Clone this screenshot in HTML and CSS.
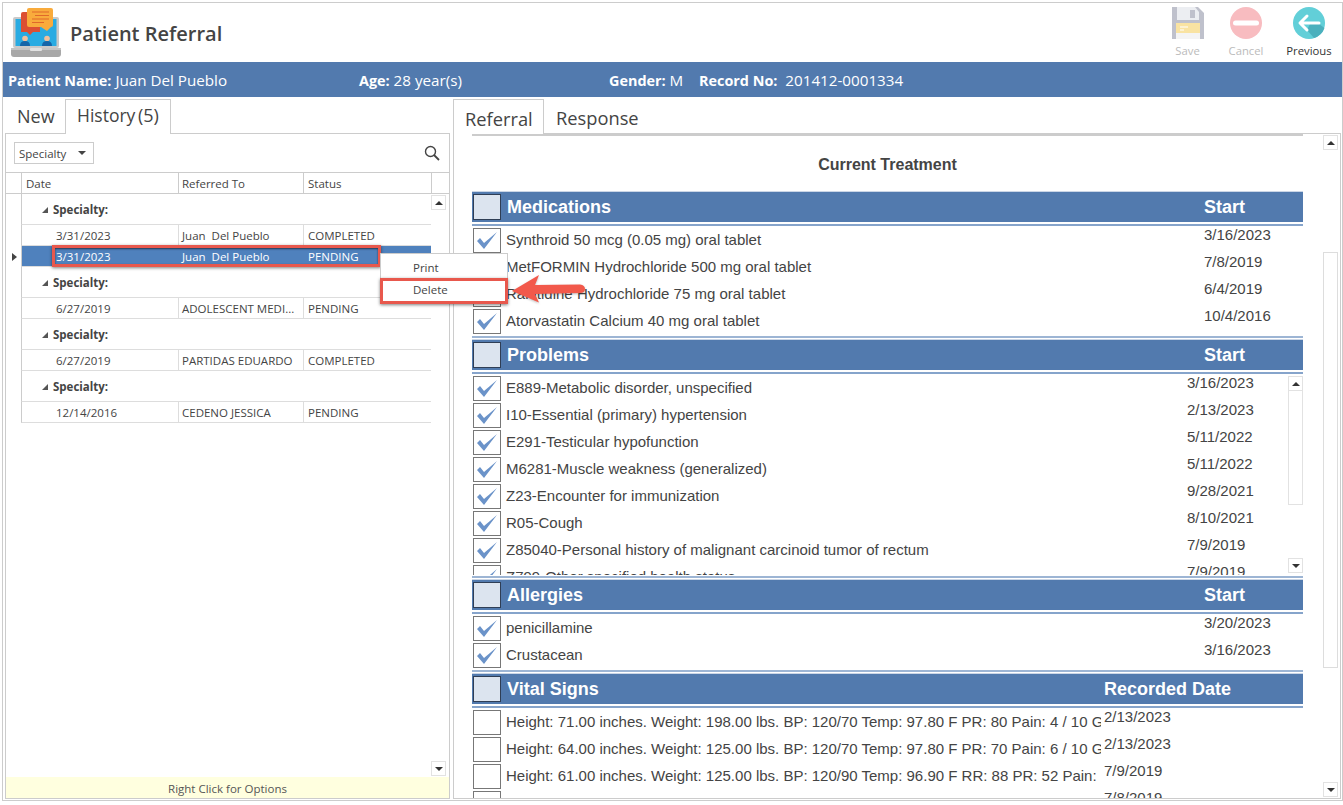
FILE: index.html
```html
<!DOCTYPE html>
<html lang="en">
<head>
<meta charset="utf-8">
<title>Patient Referral</title>
<link rel="stylesheet" href="styles.css">
</head>
<body>
<div class="app">
  <header class="top">
    <svg class="logo" viewBox="0 0 50 50" width="50" height="50">
      <rect x="2" y="9" width="46" height="31" rx="2" fill="#c9c9c9"/>
      <rect x="4.5" y="11" width="41" height="27" fill="#29abe2"/>
      <path d="M0 40h50v6q0 3-3 3H3q-3 0-3-3z" fill="#a8a8a8"/>
      <path d="M0 40h50v2H0z" fill="#c4c4c4"/>
      <rect x="19" y="40" width="12" height="3" rx="1" fill="#e2e2e2"/>
      <path d="M12 4h17v20H22l-3 3-3-3h-6V6q0-2 2-2z" fill="#dc4f33"/>
      <rect x="16" y="0" width="26" height="19" rx="2" fill="#f9ab3c"/>
      <path d="M30 19h10l-4 4z" fill="#f9ab3c"/>
      <path d="M21 4h17M24 7.5h14M21 11h17M21 14.5h12" stroke="#e0692a" stroke-width="1.1"/>
      <circle cx="14" cy="30.500" r="2.800" fill="#f2c09c"/>
      <path d="M9 38q0-5 5-5t5 5z" fill="#1565a8"/>
      <circle cx="36" cy="30.500" r="2.800" fill="#f2c09c"/>
      <path d="M31 38q0-5 5-5t5 5z" fill="#1565a8"/>
    </svg>
    <h1 class="title">Patient Referral</h1>
    <div class="actions">
      <div class="action off act-save">
        <svg viewBox="0 0 32 32" width="32" height="32">
          <path d="M0 0h26l6 6v26H0z" fill="#bfc1cc"/>
          <path d="M5 0h18l4 5v8H5z" fill="#eceef2"/>
          <rect x="18" y="3" width="5" height="8" fill="#bfc1cc"/>
          <rect x="4" y="16" width="24" height="16" fill="#f4f4f4"/>
          <rect x="4" y="16" width="24" height="10" fill="#f9e3a2"/>
          <path d="M8 20h8M8 23h4" stroke="#fff" stroke-width="1.2"/>
        </svg>
        <span>Save</span>
      </div>
      <div class="action off act-cancel">
        <svg viewBox="0 0 32 32" width="32" height="32">
          <circle cx="16" cy="16" r="16" fill="#f8bcc0"/>
          <rect x="3" y="13.500" width="26" height="5" rx="2.500" fill="#fff"/>
        </svg>
        <span>Cancel</span>
      </div>
      <div class="action act-prev">
        <svg viewBox="0 0 32 32" width="32" height="32">
          <circle cx="16" cy="16" r="16" fill="#62cfd8"/>
          <path d="M14 23l3-6h9l5.500 4A16 16 0 0 1 21 31z" fill="#4bb0bd"/>
          <path d="M14 9l-7 7 7 7M8 16h18" fill="none" stroke="#fff" stroke-width="3" stroke-linecap="round" stroke-linejoin="round"/>
        </svg>
        <span>Previous</span>
      </div>
    </div>
  </header>

  <div class="band">
    <span class="f-name"><b>Patient Name:</b> Juan Del Pueblo</span>
    <span class="f-age"><b>Age:</b> 28 year(s)</span>
    <span class="f-gender"><b>Gender:</b> M</span>
    <span class="f-record"><b>Record No:</b> <em>201412-0001334</em></span>
  </div>

  <main class="panes">
    <section class="left">
      <nav class="tabs">
        <span class="tab tab-new">New</span>
        <span class="tab active tab-history">History <small>(5)</small></span>
      </nav>
      <div class="left-body">
        <div class="toolbar">
          <div class="select">Specialty<i class="caret"></i></div>
          <svg class="search" viewBox="0 0 16 16" width="16" height="16">
            <circle cx="6.500" cy="6.500" r="5" fill="none" stroke="#444" stroke-width="1.400"/>
            <path d="M10 10l5 5" stroke="#444" stroke-width="1.800"/>
          </svg>
        </div>
        <div class="grid-head">
          <span class="ind"></span>
          <span class="c1">Date</span>
          <span class="c2">Referred To</span>
          <span class="c3">Status</span>
          <span class="c4"></span>
        </div>
        <div class="grid">
          <div class="grid-rows">
            <div class="group"><i class="tri"></i>Specialty:</div>
            <div class="row"><span class="c1">3/31/2023</span><span class="c2">Juan&nbsp; Del Pueblo</span><span class="c3">COMPLETED</span></div>
            <div class="row sel"><i class="pointer"></i><span class="c1">3/31/2023</span><span class="c2">Juan&nbsp; Del Pueblo</span><span class="c3">PENDING</span></div>
            <div class="group"><i class="tri"></i>Specialty:</div>
            <div class="row"><span class="c1">6/27/2019</span><span class="c2">ADOLESCENT MEDI...</span><span class="c3">PENDING</span></div>
            <div class="group"><i class="tri"></i>Specialty:</div>
            <div class="row"><span class="c1">6/27/2019</span><span class="c2">PARTIDAS EDUARDO</span><span class="c3">COMPLETED</span></div>
            <div class="group"><i class="tri"></i>Specialty:</div>
            <div class="row"><span class="c1">12/14/2016</span><span class="c2">CEDENO JESSICA</span><span class="c3">PENDING</span></div>
          </div>
          <div class="vbar grid-bar"><span class="sb up"></span><span class="sb down"></span></div>
        </div>
        <div class="hint">Right Click for Options</div>
      </div>
    </section>

    <section class="right">
      <nav class="tabs rtabs">
        <span class="tab active tab-ref">Referral</span>
        <span class="tab tab-resp">Response</span>
      </nav>
      <div class="right-body">
        <div class="doc">
          <h2 class="doc-title">Current Treatment</h2>

          <div class="sec-head"><i class="box head-box"></i><span class="sec-name">Medications</span><span class="sec-date d1">Start</span></div>
          <div class="list">
            <div class="item"><i class="box on"></i><span class="txt">Synthroid 50 mcg (0.05 mg) oral tablet</span><span class="dt d1">3/16/2023</span></div>
            <div class="item"><i class="box on"></i><span class="txt">MetFORMIN Hydrochloride 500 mg oral tablet</span><span class="dt d1">7/8/2019</span></div>
            <div class="item"><i class="box on"></i><span class="txt">Ranitidine Hydrochloride 75 mg oral tablet</span><span class="dt d1">6/4/2019</span></div>
            <div class="item"><i class="box on"></i><span class="txt">Atorvastatin Calcium 40 mg oral tablet</span><span class="dt d1">10/4/2016</span></div>
          </div>
          <div class="foot"></div>

          <div class="sec-head"><i class="box head-box"></i><span class="sec-name">Problems</span><span class="sec-date d1">Start</span></div>
          <div class="list clip">
            <div class="item"><i class="box on"></i><span class="txt">E889-Metabolic disorder, unspecified</span><span class="dt d2">3/16/2023</span></div>
            <div class="item"><i class="box on"></i><span class="txt">I10-Essential (primary) hypertension</span><span class="dt d2">2/13/2023</span></div>
            <div class="item"><i class="box on"></i><span class="txt">E291-Testicular hypofunction</span><span class="dt d2">5/11/2022</span></div>
            <div class="item"><i class="box on"></i><span class="txt">M6281-Muscle weakness (generalized)</span><span class="dt d2">5/11/2022</span></div>
            <div class="item"><i class="box on"></i><span class="txt">Z23-Encounter for immunization</span><span class="dt d2">9/28/2021</span></div>
            <div class="item"><i class="box on"></i><span class="txt">R05-Cough</span><span class="dt d2">8/10/2021</span></div>
            <div class="item"><i class="box on"></i><span class="txt">Z85040-Personal history of malignant carcinoid tumor of rectum</span><span class="dt d2">7/9/2019</span></div>
            <div class="item"><i class="box on"></i><span class="txt">Z799-Other specified health status</span><span class="dt d2">7/9/2019</span></div>
            <div class="vbar inner-bar"><span class="sb up"></span><span class="track"></span><span class="sb down"></span></div>
          </div>
          <div class="foot short"></div>

          <div class="sec-head"><i class="box head-box"></i><span class="sec-name">Allergies</span><span class="sec-date d1">Start</span></div>
          <div class="list">
            <div class="item"><i class="box on"></i><span class="txt">penicillamine</span><span class="dt d1">3/20/2023</span></div>
            <div class="item"><i class="box on"></i><span class="txt">Crustacean</span><span class="dt d1">3/16/2023</span></div>
          </div>
          <div class="foot"></div>

          <div class="sec-head"><i class="box head-box"></i><span class="sec-name">Vital Signs</span><span class="sec-date d3">Recorded Date</span></div>
          <div class="list">
            <div class="item"><i class="box"></i><span class="txt narrow">Height: 71.00 inches. Weight: 198.00 lbs. BP: 120/70 Temp: 97.80 F PR: 80 Pain: 4 / 10 G</span><span class="dt d3">2/13/2023</span></div>
            <div class="item"><i class="box"></i><span class="txt narrow">Height: 64.00 inches. Weight: 125.00 lbs. BP: 120/70 Temp: 97.80 F PR: 70 Pain: 6 / 10 G</span><span class="dt d3">2/13/2023</span></div>
            <div class="item"><i class="box"></i><span class="txt narrow">Height: 61.00 inches. Weight: 125.00 lbs. BP: 120/90 Temp: 96.90 F RR: 88 PR: 52 Pain:</span><span class="dt d3">7/9/2019</span></div>
            <div class="item"><i class="box"></i><span class="dt d3">7/8/2019</span></div>
          </div>
        </div>
        <div class="vbar page-bar"><span class="sb up"></span><span class="spacer"></span><span class="track"></span><span class="sb down"></span></div>
      </div>
    </section>
  </main>

  <div class="mark mark-row"></div>
  <div class="menu">
    <div class="menu-item">Print</div>
    <div class="menu-item del">Delete</div>
  </div>
  <svg class="arrow" viewBox="0 0 80 35" width="80" height="35">
    <path d="M2 21L29 5l-4 10 45-.5q5 .5 5 4.500t-5 4l-45 1 4 8.500z" fill="#f2594b"/>
  </svg>
</div>
</body>
</html>
```

FILE: styles.css
```css
* { box-sizing: border-box; }
html, body { margin: 0; padding: 0; background: #fff; }
body { width: 1343px; height: 805px; overflow: hidden; font-family: "Open Sans", "Noto Sans", sans-serif; color: #444; }
i { font-style: normal; display: block; }
em { font-style: normal; margin-left: 4px; }

.app { position: relative; margin: 2px 0 0 2px; width: 1341px; height: 799px; border: 1px solid #ccc; display: flex; flex-direction: column; }

.top { height: 59px; display: flex; align-items: flex-start; flex: none; }
.logo { margin: 5px 0 0 8px; flex: none; }
.title { margin: 16px 0 0 9px; font-size: 20px; font-weight: 600; line-height: 30px; color: #444; }
.actions { margin-left: auto; display: flex; margin-right: 3px; }
.action { margin-top: 4px; display: flex; flex-direction: column; align-items: center; font-size: 11.3px; line-height: 14px; color: #333; }
.action svg { margin-bottom: 5px; }
.action.off { color: #bbb; }
.act-save { width: 51px; }
.act-cancel { width: 66px; }
.act-prev { width: 60px; }

.band { height: 35px; flex: none; background: #527aae; color: #fff; display: flex; align-items: center; padding: 1px 0 0 5px; font-size: 15.2px; line-height: 30px; }
.band b { font-weight: 700; font-size: 14.4px; }
.f-name { width: 351px; }
.f-age { width: 250px; }
.f-gender { width: 90px; }

.panes { flex: 1; display: flex; min-height: 0; padding: 2px 0 1px 2px; }

.left { width: 445px; flex: none; display: flex; flex-direction: column; margin-right: 3px; }
.right { flex: 1; display: flex; flex-direction: column; margin-right: 1px; min-width: 0; }

.tabs { height: 35px; flex: none; display: flex; font-size: 18px; color: #444; }
.tab { display: block; line-height: 35px; position: relative; z-index: 1; }
.tab.active { background: #fff; border: 1px solid #ccc; border-bottom: 0; height: 35px; }
.tab-new { width: 60px; padding-left: 12px; }
.tab-history { width: 106px; padding-left: 11px; font-size: 17.5px; line-height: 31px; }
.tab-history small { font-size: 18px; margin-left: -2px; }

.left-body { flex: 1; border: 1px solid #ccc; display: flex; flex-direction: column; min-height: 0; margin-top: -1px; }
.toolbar { height: 38px; flex: none; display: flex; align-items: flex-start; justify-content: space-between; padding: 8px 9px 0 8px; }
.select { width: 80px; height: 22px; border: 1px solid #ccc; font-size: 11.5px; line-height: 22px; padding-left: 4px; position: relative; }
.caret { position: absolute; right: 7px; top: 8px; border: 4px solid transparent; border-top: 4px solid #444; border-bottom: 0; }
.search { margin-top: 3px; }

.grid-head { height: 22px; flex: none; display: flex; border-top: 1px solid #ccc; border-bottom: 1px solid #ccc; font-size: 11.5px; line-height: 21px; }
.grid-head span { border-left: 1px solid #ccc; padding-left: 4px; display: block; }
.grid-head .ind { width: 15px; border-left: 0; }
.grid-head .c1 { width: 157px; }
.grid-head .c2 { width: 125px; padding-left: 3px; }
.grid-head .c3 { width: 128px; }
.grid-head .c4 { flex: 1; }

.grid { flex: 1; display: flex; min-height: 0; position: relative; }
.grid-rows { width: 425px; flex: none; padding-left: 15px; }
.group { height: 31px; border-left: 1px solid #ccc; border-bottom: 1px solid #ddd; font-size: 11.5px; font-weight: 700; line-height: 32px; padding-left: 31px; position: relative; }
.tri { position: absolute; left: 20px; top: 13px; width: 0; height: 0; border-right: 6px solid #555; border-top: 6px solid transparent; }
.row { height: 21px; display: flex; border-left: 1px solid #ccc; border-bottom: 1px solid #ddd; font-size: 11.5px; line-height: 21px; position: relative; color: #444; }
.row span { display: block; padding-left: 4px; white-space: nowrap; border-left: 1px solid #ddd; }
.row .c1 { padding-left: 34px; border-left: 0; width: 156px; }
.row .c2 { width: 125px; padding-left: 3px; }
.row .c3 { flex: 1; }
.row.sel { background: #4f81bd; color: #fff; }
.row.sel span { border-left-color: transparent; }
.pointer { position: absolute; left: -10px; top: 7px; border-left: 5px solid #444; border-top: 4px solid transparent; border-bottom: 4px solid transparent; }

.vbar { display: flex; flex-direction: column; align-items: center; justify-content: space-between; flex: none; }
.sb { display: block; width: 15px; height: 15px; border: 1px solid #e2e2e2; background: #fff; position: relative; flex: none; }
.sb::after { content: ""; position: absolute; left: 3px; top: 5px; border: 4px solid transparent; border-top: 0; border-bottom: 4px solid #333; }
.sb.down::after { border-bottom: 0; border-top: 4px solid #333; }
.grid-bar { width: 15px; padding: 1px 0; height: 100%; }

.hint { height: 21px; flex: none; background: #ffffdf; text-align: center; font-size: 11.5px; line-height: 24px; overflow: hidden; color: #555; }

.right .tabs { height: 34px; font-size: 18.3px; }
.tab-ref { width: 91px; padding-left: 11px; line-height: 38px; }
.tab-resp { padding-left: 12px; line-height: 38px; }
.right-body { flex: 1; border: 1px solid #ccc; display: flex; min-height: 0; overflow: hidden; padding-left: 18px; }

.doc { width: 831px; flex: none; overflow: hidden; font-family: "Liberation Sans", Arial, sans-serif; border-top: 2px solid #ccc; }
.doc-title { margin: 0; height: 55px; text-align: center; font-size: 16px; font-weight: 700; line-height: 57px; color: #444; }

.sec-head { height: 35px; display: flex; align-items: flex-start; position: relative; border-top: 1px solid #cbd6e6; background: linear-gradient(#527aae 0 30px, #fff 30px 32px, #86a4cb 32px); color: #fff; font-size: 18px; font-weight: 700; line-height: 30px; }
.sec-name { margin-left: 6px; }
.sec-date { position: absolute; top: 0; }
.d1 { left: 732px; }
.d2 { left: 715px; }
.d3 { left: 632px; }

.box { width: 28px; height: 25px; border: 1px solid #777; background: #fff; flex: none; position: relative; margin-left: 1px; }
.head-box.box { background: #dce4ef; border-color: #2f3e55; margin-top: 2px; height: 26px; }
.box.on::after { content: ""; position: absolute; inset: 0; background: #6b93c9; clip-path: polygon(3px 12px, 6px 9px, 10px 14px, 23px 3px, 10px 20px); }

.list { position: relative; }
.clip { height: 201px; overflow: hidden; }
.foot { height: 5px; padding-top: 2px; }
.foot::before { content: ""; display: block; height: 2px; background: #9db5d4; }
.foot.short { height: 4px; padding-top: 1px; }
.item { height: 27px; display: flex; align-items: flex-start; position: relative; padding-top: 2px; font-size: 15px; color: #444; }
.txt { margin-left: 5px; line-height: 24px; white-space: nowrap; }
.narrow { width: 595px; overflow: hidden; }
.dt { position: absolute; top: 0; line-height: 18px; }

.inner-bar { position: absolute; left: 816px; top: 2px; width: 15px; height: 197px; justify-content: flex-start; }
.inner-bar .track { height: 114px; width: 15px; border: 1px solid #e2e2e2; border-top: 0; display: block; }
.inner-bar .down { margin-top: auto; }

.page-bar { width: 15px; margin-left: 20px; padding: 1px 0; height: 100%; justify-content: flex-start; }
.page-bar .spacer { display: block; height: 102px; flex: none; }
.page-bar .track { display: block; width: 15px; height: 416px; border: 1px solid #ddd; flex: none; }
.page-bar .down { margin-top: auto; }

.mark { position: absolute; border: 3px solid #e8584d; }
.mark-row { left: 49px; top: 242px; width: 329px; height: 22px; box-shadow: 0 1px 3px rgba(0,0,0,.5), inset 0 1px 2px rgba(0,0,0,.6); }
.menu { position: absolute; left: 377px; top: 250px; width: 128px; height: 51px; background: #fff; border: 1px solid #ccc; font-size: 11.5px; color: #444; z-index: 5; }
.menu-item { height: 24px; line-height: 28px; padding-left: 32px; }
.menu-item.del { height: 26px; margin: 0 -1px; border: 3px solid #e8584d; line-height: 18px; padding-left: 30px; box-shadow: 0 1px 3px rgba(0,0,0,.5); }
.arrow { position: absolute; left: 507px; top: 267px; z-index: 6; filter: drop-shadow(0 1px 1px rgba(0,0,0,.25)); }
```
